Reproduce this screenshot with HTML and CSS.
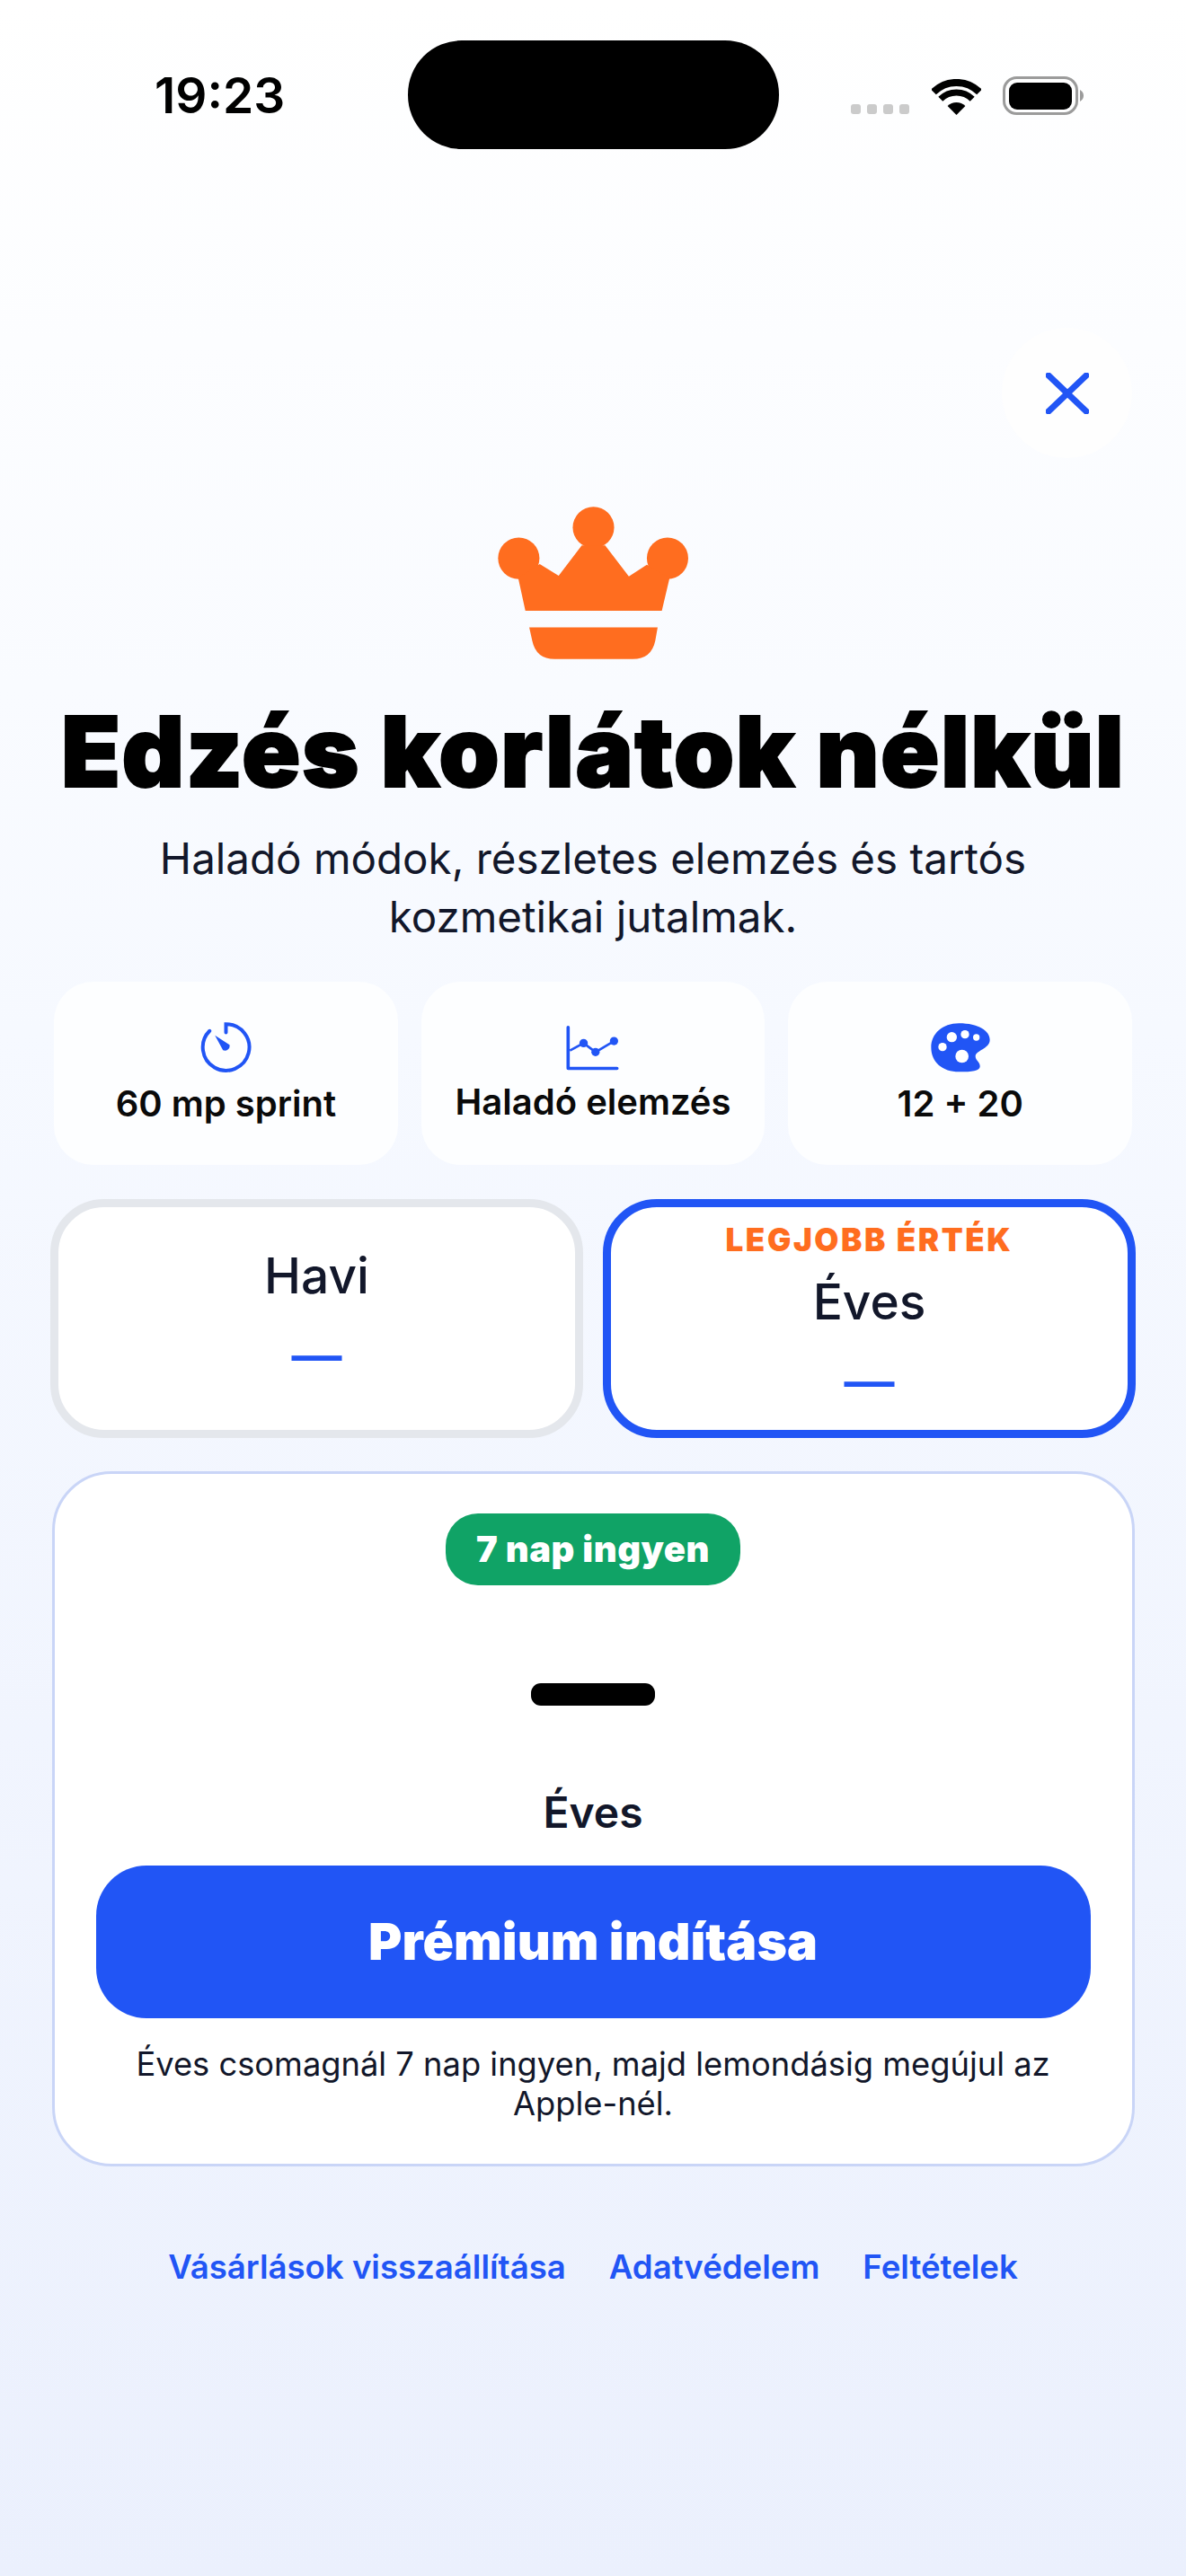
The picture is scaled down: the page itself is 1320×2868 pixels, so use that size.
FILE: index.html
```html
<!DOCTYPE html>
<html lang="hu">
<head>
    <meta charset="utf-8">
    <title>Prémium</title>
    <link rel="stylesheet" href="styles.css">
</head>
<body>
    <div class="status-bar">
        <div class="status-time">19:23</div>
        <div class="island"></div>
        <div class="status-icons">
            <div class="signal"><span></span><span></span><span></span><span></span></div>
            <svg class="wifi" width="55" height="40" viewBox="0 0 55 40">
                <path d="M2 14.5A36 36 0 0 1 53 14.5" fill="none" stroke="#000" stroke-width="8"/>
                <path d="M9.8 22.3A25 25 0 0 1 45.2 22.3" fill="none" stroke="#000" stroke-width="7"/>
                <path d="M27.5 40L17.6 30.1A14 14 0 0 1 37.4 30.1Z"/>
            </svg>
            <svg class="battery" width="90" height="43" viewBox="0 0 90 43">
                <rect x="1.5" y="1.5" width="81" height="40" rx="14" fill="none" stroke="#9b9b9b" stroke-width="3"/>
                <rect x="7" y="7" width="70" height="30" rx="9"/>
                <path d="M86 15C89 17 90 19 90 21.5C90 24 89 26 86 28Z" fill="#9b9b9b"/>
            </svg>
        </div>
    </div>

    <div class="paywall">
        <div class="close-row">
            <div class="close-btn">
                <svg width="48" height="46" viewBox="0 0 48 46">
                    <path d="M3 3L45 43M45 3L3 43" fill="none" stroke="#2155f5" stroke-width="7" stroke-linecap="round"/>
                </svg>
            </div>
        </div>

        <svg class="crown" width="212" height="170" viewBox="160 103 635 508">
            <circle cx="479" cy="172" r="69"/>
            <circle cx="230" cy="275" r="69"/>
            <circle cx="726" cy="275" r="69"/>
            <path d="M228 340L252 450H707L733 340L657 296L597 335L518 232H440L363 333L300 294Z"/>
            <path d="M265 505H693L685 550Q672 611 610 611H350Q288 611 275 550Z"/>
        </svg>

        <h1 class="title">Edzés korlátok nélkül</h1>
        <p class="subtitle">Haladó módok, részletes elemzés és tartós kozmetikai jutalmak.</p>

        <div class="features">
            <div class="feature">
                <svg class="feature-icon" width="63" height="60" viewBox="60 50 190 180">
                    <path d="M155 90V62A78 78 0 1 1 100 85" fill="none" stroke="#2155f5" stroke-width="12" stroke-linecap="round"/>
                    <path d="M118 100L167 132A16 16 0 0 1 145 150Z" fill="#2155f5"/>
                </svg>
                <div class="feature-label">60 mp sprint</div>
            </div>
            <div class="feature">
                <svg class="feature-icon" width="63" height="56" viewBox="85 55 190 168">
                    <path d="M98 72V210H262" fill="none" stroke="#2155f5" stroke-width="11" stroke-linecap="round" stroke-linejoin="round"/>
                    <path d="M104 150L150 125L190 155L252 118" fill="none" stroke="#2155f5" stroke-width="8"/>
                    <circle cx="150" cy="125" r="14" fill="#2155f5"/>
                    <circle cx="190" cy="155" r="14" fill="#2155f5"/>
                    <circle cx="252" cy="118" r="14" fill="#2155f5"/>
                </svg>
                <div class="feature-label">Haladó elemzés</div>
            </div>
            <div class="feature">
                <svg class="feature-icon" width="70" height="60" viewBox="100 50 210 180">
                    <path d="M200 60C265 60 303 85 303 115C303 145 255 150 255 170C255 185 272 190 270 205C268 218 245 222 200 222C145 222 107 190 107 140C107 95 145 60 200 60Z" fill="#2155f5"/>
                    <circle cx="176" cy="106" r="17" fill="#fff"/>
                    <circle cx="220" cy="97" r="14" fill="#fff"/>
                    <circle cx="258" cy="107" r="11" fill="#fff"/>
                    <circle cx="145" cy="139" r="14" fill="#fff"/>
                    <circle cx="210" cy="170" r="22" fill="#fff"/>
                </svg>
                <div class="feature-label">12 + 20</div>
            </div>
        </div>

        <div class="plans">
            <div class="plan">
                <div class="plan-name">Havi</div>
                <div class="plan-price">—</div>
            </div>
            <div class="plan plan-selected">
                <div class="plan-tag">LEGJOBB ÉRTÉK</div>
                <div class="plan-name">Éves</div>
                <div class="plan-price">—</div>
            </div>
        </div>

        <div class="offer">
            <div class="trial-pill">7 nap ingyen</div>
            <div class="price-bar"></div>
            <div class="offer-name">Éves</div>
            <div class="cta">Prémium indítása</div>
            <p class="offer-note">Éves csomagnál 7 nap ingyen, majd lemondásig megújul az Apple-nél.</p>
        </div>

        <div class="links">
            <a>Vásárlások visszaállítása</a>
            <a>Adatvédelem</a>
            <a>Feltételek</a>
        </div>
    </div>
</body>
</html>
```

FILE: styles.css
```css
* {
    box-sizing: border-box;
}
body {
    margin: 0;
    height: 2868px;
    overflow: hidden;
    font-family: Inter, "Noto Sans", sans-serif;
    color: #12172a;
    background: linear-gradient(180deg, #ffffff 0%, #f6f9ff 40%, #ebf0fd 100%);
}

/* status bar */
.status-bar {
    display: flex;
    align-items: flex-start;
    padding-top: 45px;
    height: 166px;
}
.status-time {
    width: 454px;
    padding-left: 172px;
    font-size: 55px;
    font-weight: 600;
    line-height: 123px;
    color: #000;
}
.island {
    width: 413px;
    height: 121px;
    border-radius: 60px;
    background: #000;
}
.status-icons {
    display: flex;
    align-items: flex-end;
    height: 83px;
    margin-left: 80px;
}
.signal {
    display: flex;
    gap: 7px;
    margin-bottom: 1px;
}
.signal span {
    width: 11px;
    height: 11px;
    border-radius: 3px;
    background: #cbcbcb;
}
.wifi {
    margin-left: 25px;
}
.battery {
    margin-left: 24px;
}

.paywall {
    display: flex;
    flex-direction: column;
    align-items: center;
    padding: 0 60px;
}
.close-row {
    display: flex;
    justify-content: flex-end;
    width: 100%;
    margin-top: 199px;
}
.close-btn {
    display: flex;
    justify-content: center;
    align-items: center;
    width: 145px;
    height: 145px;
    border-radius: 50%;
    background: #fefefe;
}
.crown {
    margin-top: 54px;
    fill: #ff6d1f;
}
.title {
    margin: 43px -40px 0;
    font-size: 108px;
    font-weight: 900;
    line-height: 120px;
    letter-spacing: 1.4px;
    -webkit-text-stroke: 2px #000;
    color: #000;
    white-space: nowrap;
}
.subtitle {
    width: 1040px;
    margin: 26px 0 0;
    font-size: 47.5px;
    line-height: 65px;
    text-align: center;
}

.features {
    display: grid;
    grid-template-columns: repeat(3, 1fr);
    gap: 26px;
    width: 100%;
    margin-top: 40px;
}
.feature {
    display: flex;
    flex-direction: column;
    align-items: center;
    justify-content: center;
    height: 204px;
    border-radius: 44px;
    background: #fdfeff;
}
.feature-label {
    margin-top: 8px;
    font-size: 40px;
    font-weight: 600;
    line-height: 50px;
    color: #0a0a0a;
}

.plans {
    display: grid;
    grid-template-columns: 593px 593px;
    gap: 22px;
    width: 1208px;
    margin-top: 38px;
}
.plan {
    display: flex;
    flex-direction: column;
    align-items: center;
    justify-content: center;
    height: 266px;
    padding-bottom: 12px;
    border: 9px solid #e4e7ec;
    border-radius: 60px;
    background: #fff;
}
.plan-selected {
    border-color: #2155f5;
}
.plan-tag {
    margin-bottom: 15px;
    font-size: 35px;
    font-weight: 900;
    line-height: 42px;
    letter-spacing: 2.6px;
    color: #ff6d1f;
}
.plan-name {
    font-size: 55px;
    font-weight: 550;
    line-height: 66px;
}
.plan-price {
    margin-top: 28px;
    font-size: 56px;
    font-weight: 600;
    line-height: 56px;
    color: #2155f5;
}

.offer {
    display: flex;
    flex-direction: column;
    align-items: center;
    width: 1205px;
    height: 774px;
    margin-top: 37px;
    padding: 44px 46px 0;
    border: 3px solid #c9d5f7;
    border-radius: 66px;
    background: #fff;
}
.trial-pill {
    padding: 0 34px;
    height: 80px;
    border-radius: 36px;
    font-size: 40px;
    font-weight: 900;
    line-height: 80px;
    letter-spacing: 0.5px;
    color: #fff;
    background: #10a366;
}
.price-bar {
    width: 138px;
    height: 25px;
    margin-top: 109px;
    border-radius: 11px;
    background: #000;
}
.offer-name {
    margin-top: 89px;
    font-size: 48px;
    font-weight: 600;
    line-height: 60px;
}
.cta {
    width: 100%;
    height: 170px;
    margin-top: 29px;
    border-radius: 56px;
    font-size: 57px;
    font-weight: 900;
    line-height: 170px;
    text-align: center;
    color: #fff;
    background: #2155f5;
}
.offer-note {
    width: 1030px;
    margin: 29px 0 0;
    font-size: 36.3px;
    line-height: 44px;
    text-align: center;
}

.links {
    display: flex;
    justify-content: center;
    gap: 48px;
    margin-top: 90px;
    font-size: 36.6px;
    font-weight: 600;
    line-height: 44px;
    color: #2155f5;
}
```
